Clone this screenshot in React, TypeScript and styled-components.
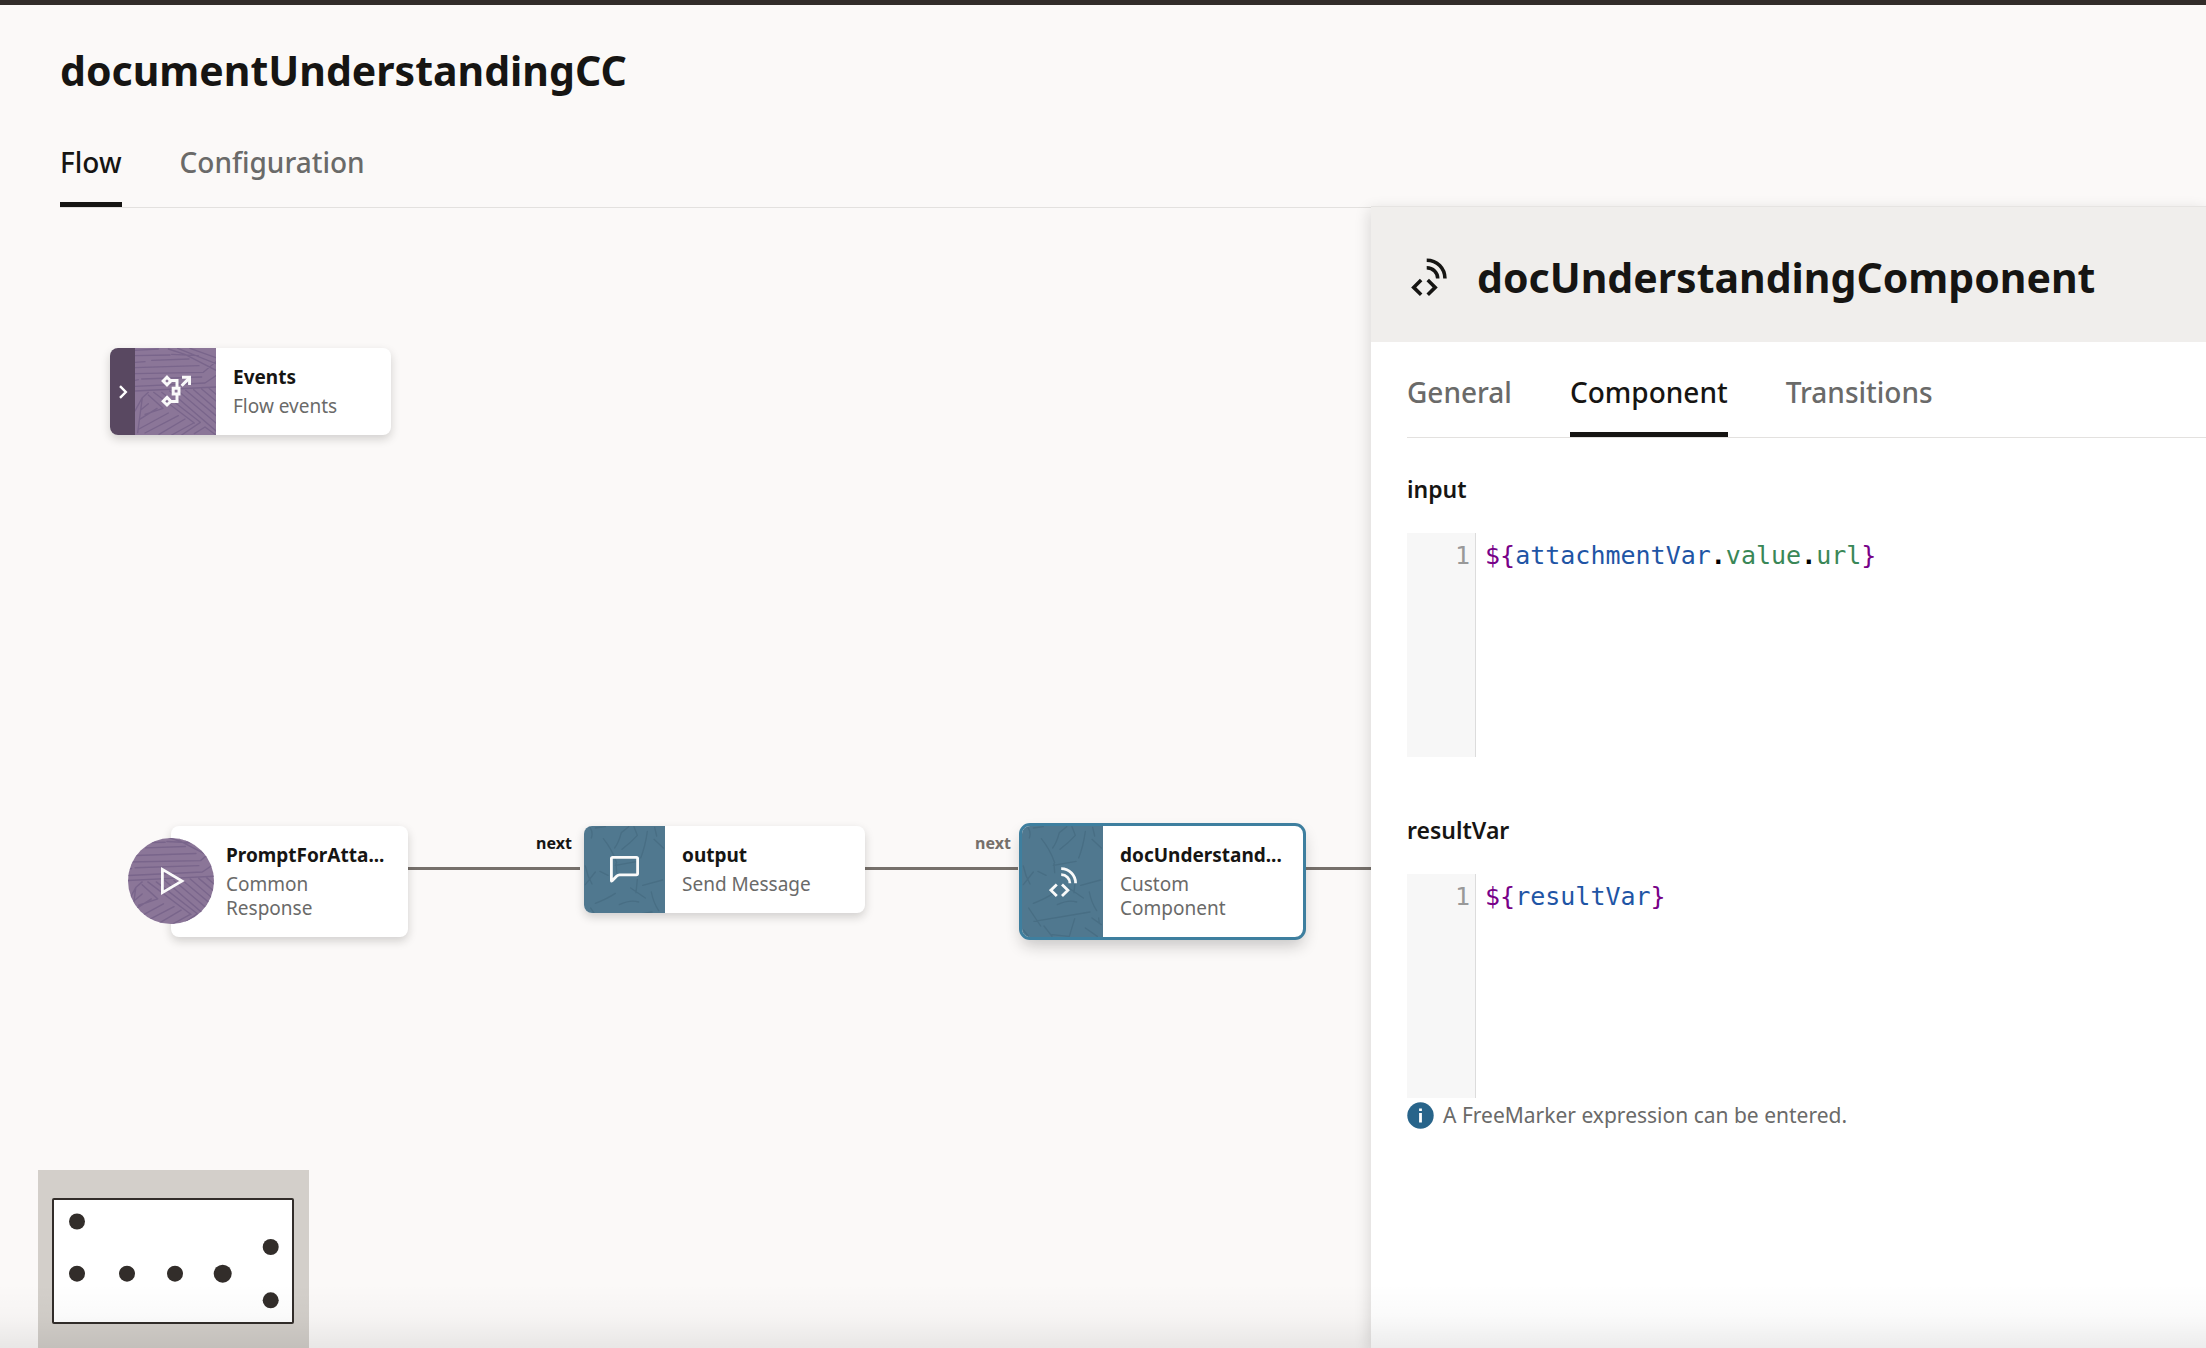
import React, { useId, useState } from 'react';
import styled, { createGlobalStyle, css } from 'styled-components';

const color = {
  ink: '#161513',
  muted: '#6a6a69',
  canvas: '#fbf9f8',
  line: '#e3e1df',
  edge: '#76706b',
  teal: '#50788f',
  tealLine: '#486e84',
  purple: '#8b7698',
  purpleLine: '#79658b',
  focus: '#3e7f9f',
};

const GlobalStyle = createGlobalStyle`
  *, *::before, *::after { box-sizing: border-box; }
  body {
    margin: 0;
    background: ${color.canvas};
    color: ${color.ink};
    font-family: "Noto Sans", "Open Sans", sans-serif;
  }
  button, textarea { font: inherit; color: inherit; }
  h1, h2, p, pre { margin: 0; }
`;

/* ---------- page shell ---------- */

const Page = styled.div`
  position: relative;
  display: flex;
  flex-direction: column;
  min-height: 100vh;
  border-top: 5px solid #322d2a;
  overflow: hidden;

  &::after {
    content: '';
    position: absolute;
    inset: auto 0 0;
    height: 64px;
    background: linear-gradient(rgba(0, 0, 0, 0), rgba(0, 0, 0, 0.02) 50%, rgba(0, 0, 0, 0.075));
    pointer-events: none;
    z-index: 5;
  }
`;

const PageHeader = styled.header`
  display: flex;
  flex-direction: column;
  gap: 44px;
  padding: 37px 0 0 60px;
`;

const heading = css`
  font-size: 41px;
  line-height: 56px;
  font-weight: 700;
`;

const PageTitle = styled.h1`
  ${heading}
`;

const Tabs = styled.div`
  display: flex;
  gap: 58px;
  border-bottom: 1px solid ${color.line};
`;

const Tab = styled.button`
  padding: 0 0 20px;
  border: 0;
  border-bottom: 5px solid transparent;
  background: none;
  color: ${color.muted};
  font-size: 28px;
  line-height: 40px;
  font-weight: 500;
  cursor: pointer;

  &[aria-selected='true'] {
    color: ${color.ink};
    border-bottom-color: ${color.ink};
  }
`;

const Workspace = styled.main`
  flex: 1;
  display: grid;
  grid-template-columns: minmax(0, 1.642fr) minmax(0, 1fr);
`;

/* ---------- flow canvas ---------- */

const Canvas = styled.section`
  position: relative;
  overflow: hidden;
`;

const Edges = styled.svg`
  position: absolute;
  inset: 0;
  width: 100%;
  height: 100%;
`;

const EdgeLabel = styled.span<{ $x: number; $y: number; $strong?: boolean }>`
  position: absolute;
  left: ${(p) => p.$x}px;
  top: ${(p) => p.$y}px;
  color: ${(p) => (p.$strong ? color.ink : color.edge)};
  font-size: 16px;
  line-height: 24px;
  font-weight: 700;
`;

const NodeCard = styled.article<{ $x: number; $y: number; $start?: boolean; $selected?: boolean }>`
  position: absolute;
  left: ${(p) => p.$x}px;
  top: ${(p) => p.$y}px;
  display: flex;
  width: ${(p) => (p.$start ? 237 : 281)}px;
  padding-left: ${(p) => (p.$start ? 38 : 0)}px;
  border-radius: 8px;
  background: #fff;
  box-shadow: 0 4px 10px rgba(22, 21, 19, 0.18);
  ${(p) =>
    p.$selected &&
    css`
      outline: 3px solid ${color.focus};
      box-shadow: 0 8px 16px rgba(22, 21, 19, 0.24);
    `}
`;

const NodeText = styled.div`
  flex: 1;
  min-width: 0;
  padding: 17px 18px 17px 17px;
`;

const NodeTitle = styled.h2`
  margin-bottom: 5px;
  font-size: 19px;
  line-height: 24px;
  font-weight: 700;
  white-space: nowrap;
`;

const NodeType = styled.p`
  color: ${color.muted};
  font-size: 19px;
  line-height: 24px;
`;

const Expander = styled.button`
  flex: none;
  display: grid;
  place-items: center;
  width: 25px;
  padding: 0;
  border: 0;
  border-radius: 8px 0 0 8px;
  background: #594861;
  color: #fff;
  cursor: pointer;
`;

const Tile = styled.div<{ $tone: 'teal' | 'purple'; $rounded?: boolean }>`
  position: relative;
  z-index: 0;
  flex: none;
  display: grid;
  place-items: center;
  width: 81px;
  overflow: hidden;
  border-radius: ${(p) => (p.$rounded ? '8px 0 0 8px' : '0')};
  background: ${(p) => (p.$tone === 'teal' ? color.teal : color.purple)};
  color: #fafafa;
`;

const StartBadge = styled(Tile)`
  position: absolute;
  left: -43px;
  top: 12px;
  width: 86px;
  height: 86px;
  border-radius: 50%;
`;

/* Texture painted behind the tile's icon. */
const PatternSvg = styled.svg`
  position: absolute;
  inset: 0;
  z-index: -1;
  width: 100%;
  height: 100%;
`;

const MiniMap = styled.div`
  position: absolute;
  left: 38px;
  bottom: 0;
  width: 271px;
  height: 178px;
  padding: 28px 14px;
  background: #d3cfca;
`;

const MiniMapView = styled.svg`
  display: block;
  width: 242px;
  height: 126px;
`;

/* ---------- property panel ---------- */

const Panel = styled.aside`
  position: relative;
  z-index: 1;
  margin-top: -2px;
  border-top: 1px solid #e6e4e2;
  background: #fff;
  box-shadow: -2px 4px 14px rgba(22, 21, 19, 0.14);
`;

const PanelHeader = styled.header`
  display: flex;
  align-items: center;
  gap: 30px;
  padding: 42px 40px 37px;
  background: #f0eeec;
`;

const PanelTitle = styled.h2`
  ${heading}
`;

const PanelBody = styled.div`
  padding: 30px 0 0 36px;
`;

const Fields = styled.div`
  display: flex;
  flex-direction: column;
  gap: 57px;
  padding: 35px 36px 0 0;
`;

const Field = styled.div`
  display: flex;
  flex-direction: column;
`;

const FieldLabel = styled.label`
  margin-bottom: 28px;
  font-size: 23px;
  line-height: 32px;
  font-weight: 600;
`;

const Editor = styled.div`
  display: grid;
  grid-template-columns: 69px minmax(0, 1fr);
  height: 224px;
  font-family: "DejaVu Sans Mono", monospace;
  font-size: 25px;
  line-height: 32px;
`;

const Gutter = styled.div`
  padding: 7px 5px;
  border-right: 1px solid #dcdcdc;
  background: #f7f7f7;
  color: #999;
  text-align: right;
`;

const CodeArea = styled.div`
  display: grid;
`;

const codeLayer = css`
  grid-area: 1 / 1;
  padding: 7px 9px;
  font: inherit;
  white-space: pre-wrap;
`;

const Highlighted = styled.pre`
  ${codeLayer}
`;

const CodeInput = styled.textarea`
  ${codeLayer}
  border: 0;
  outline: 0;
  resize: none;
  background: none;
  color: transparent;
  caret-color: ${color.ink};
`;

const tokenColor = { delimiter: '#770088', variable: '#1f55a5', property: '#3a8757', dot: '#000000' };

const Token = styled.span<{ $kind: keyof typeof tokenColor }>`
  color: ${(p) => tokenColor[p.$kind]};
  font-weight: ${(p) => (p.$kind === 'dot' ? 700 : 400)};
`;

const Hint = styled.p`
  display: flex;
  align-items: center;
  gap: 9px;
  margin-top: 1px;
  color: ${color.muted};
  font-size: 21px;
  line-height: 32px;
`;

/* ---------- drawings ---------- */

const PurplePattern = () => (
  <PatternSvg viewBox="0 0 243 263" preserveAspectRatio="xMidYMid slice" aria-hidden="true">
    <path
      fill="none"
      stroke={color.purpleLine}
      strokeWidth="4"
      strokeLinecap="round"
      strokeLinejoin="round"
      d="M0 8L70 4M0 24L105 22M50 38L162 34M0 44L30 42M0 60L192 54M0 78L205 74L243 42M20 94L200 88M0 98L10 96M0 116L210 106L243 84
      M100 4L150 20L243 68M128 2L243 48M165 2L243 30M110 20L190 24M0 130L120 124L243 118
      M8 255L22 150L0 190M22 150L40 134M20 185L40 168M14 215L66 182M12 244L100 196M30 256L130 204M72 260L150 214
      M56 134L178 226M40 142L84 182L30 200M80 134L196 224L140 262M104 130L243 250M130 130L243 226M152 128L243 204M176 126L243 184M200 124L243 160M222 122L243 140
      M110 262L176 226M178 258L210 238L243 262"
    />
  </PatternSvg>
);

const TealPattern = () => (
  <PatternSvg viewBox="0 0 243 333" preserveAspectRatio="xMidYMin slice" aria-hidden="true">
    <path
      fill="none"
      stroke={color.tealLine}
      strokeWidth="4"
      strokeLinecap="round"
      d="M18 4Q28 20 22 36M34 6L64 2M58 38Q84 70 98 110M94 118L162 106M96 112L98 140M92 66Q104 50 112 20L134 2M114 70Q140 50 160 28L150 2M190 16Q184 60 170 96
      M212 4L218 30M210 40L238 66M4 120Q10 150 24 174M4 176L34 138M48 136L72 148M176 178L236 162M160 160L156 200M140 186L184 216
      M34 232Q70 218 94 202M106 236Q140 220 164 228M20 246L56 300M36 286L204 258M202 198Q208 230 224 254M142 331L158 278M66 300L90 331M210 276L238 296M230 276L232 292M190 306L226 331M90 326L140 331M4 312L20 331"
    />
  </PatternSvg>
);

const ChevronIcon = () => (
  <svg width="10" height="14" viewBox="0 0 10 14" fill="none" stroke="currentColor" strokeWidth="2.4" aria-hidden="true">
    <path d="M2 1.2L7.8 7L2 12.8" />
  </svg>
);

const EventsIcon = () => (
  <svg width="30" height="33" viewBox="0 0 30 33" fill="none" stroke="currentColor" strokeWidth="3" aria-hidden="true">
    <path d="M6 2.2L9.8 6L6 9.8L2.2 6ZM6 22.4L9.8 26.2L6 30L2.2 26.2ZM12.2 13.2H18V19H12.2Z" />
    <path d="M10 5.6H16V12M10 26.6H16V20M20.6 10.8L28 3.4" />
    <path d="M21 2.2H28.6V10" />
  </svg>
);

const PlayIcon = () => (
  <svg width="28" height="30" viewBox="0 0 28 30" fill="none" stroke="currentColor" strokeWidth="2.8" aria-hidden="true">
    <path d="M5.4 3.4V26.6L25 15Z" />
  </svg>
);

const MessageIcon = () => (
  <svg width="29" height="27" viewBox="0 0 29 27" fill="none" stroke="currentColor" strokeWidth="2.8" strokeLinejoin="round" aria-hidden="true">
    <path d="M1.4 2.6Q1.4 1.4 2.6 1.4H26.4Q27.6 1.4 27.6 2.6V17.6Q27.6 18.8 26.4 18.8H9.6Q8 18.8 6.8 20L1.9 25Q1.4 25.4 1.4 24.6Z" />
  </svg>
);

const CustomComponentIcon = ({ width, height }: { width: number; height: number }) => (
  <svg width={width} height={height} viewBox="0 0 28 30" fill="none" stroke="currentColor" strokeWidth="2.8" aria-hidden="true">
    <path d="M12.2 1.7C20.4 1.7 26.6 8.2 26.6 16.2M12.2 7.7C17.2 7.7 20.9 11.6 20.9 16.2" />
    <path d="M7.8 17.4L1.9 23.2L7.8 29M13 17.4L18.9 23.2L13 29" />
  </svg>
);

const InfoIcon = () => (
  <svg width="27" height="27" viewBox="0 0 27 27" aria-hidden="true">
    <circle cx="13.5" cy="13.5" r="13.2" fill="#28648a" />
    <path d="M13.5 11V20.5M13.5 6.5V9" stroke="#fff" strokeWidth="2.8" />
  </svg>
);

/* ---------- pieces ---------- */

const TabBar = ({ items, initial, label }: { items: string[]; initial: string; label: string }) => {
  const [active, setActive] = useState(initial);
  return (
    <Tabs role="tablist" aria-label={label}>
      {items.map((item) => (
        <Tab key={item} type="button" role="tab" aria-selected={item === active} onClick={() => setActive(item)}>
          {item}
        </Tab>
      ))}
    </Tabs>
  );
};

const highlight = (source: string) => {
  const parts = source.match(/\$\{|\}|\.|\w+|[^\w.}]/g) ?? [];
  return parts.map((part, i) => {
    const kind =
      part === '${' || part === '}' ? 'delimiter' : part === '.' ? 'dot' : parts[i - 1] === '.' ? 'property' : 'variable';
    return (
      <Token key={i} $kind={kind}>
        {part}
      </Token>
    );
  });
};

const ExpressionField = ({ name, initial, hint }: { name: string; initial: string; hint?: string }) => {
  const id = useId();
  const [value, setValue] = useState(initial);
  return (
    <Field>
      <FieldLabel htmlFor={id}>{name}</FieldLabel>
      <Editor>
        <Gutter>
          {value.split('\n').map((_, i) => (
            <div key={i}>{i + 1}</div>
          ))}
        </Gutter>
        <CodeArea>
          <Highlighted aria-hidden="true">{highlight(value)}</Highlighted>
          <CodeInput id={id} spellCheck={false} value={value} onChange={(e) => setValue(e.target.value)} />
        </CodeArea>
      </Editor>
      {hint && (
        <Hint>
          <InfoIcon />
          {hint}
        </Hint>
      )}
    </Field>
  );
};

const NodeCaption = ({ title, type }: { title: string; type: string }) => (
  <NodeText>
    <NodeTitle>{title}</NodeTitle>
    <NodeType>{type}</NodeType>
  </NodeText>
);

const overviewDots = [
  [39, 22.5, 8],
  [39, 74.7, 8],
  [89, 74.7, 8],
  [137, 74.7, 8],
  [184.7, 74.7, 9],
  [232.7, 48, 8],
  [232.7, 101.3, 8],
];

const FlowCanvas = () => (
  <Canvas aria-label="Flow diagram">
    <Edges stroke={color.edge} strokeWidth="3" aria-hidden="true">
      <path d="M408 660.5H580M865 660.5H1018M1306 660.5H1372" />
    </Edges>
    <EdgeLabel $x={536} $y={623} $strong>
      next
    </EdgeLabel>
    <EdgeLabel $x={975} $y={623}>
      next
    </EdgeLabel>

    <NodeCard $x={110} $y={140}>
      <Expander type="button" aria-label="Expand events">
        <ChevronIcon />
      </Expander>
      <Tile $tone="purple">
        <PurplePattern />
        <EventsIcon />
      </Tile>
      <NodeCaption title="Events" type="Flow events" />
    </NodeCard>

    <NodeCard $x={171} $y={618} $start>
      <StartBadge $tone="purple">
        <PurplePattern />
        <PlayIcon />
      </StartBadge>
      <NodeCaption title="PromptForAtta..." type="Common Response" />
    </NodeCard>

    <NodeCard $x={584} $y={618}>
      <Tile $tone="teal" $rounded>
        <TealPattern />
        <MessageIcon />
      </Tile>
      <NodeCaption title="output" type="Send Message" />
    </NodeCard>

    <NodeCard $x={1022} $y={618} $selected>
      <Tile $tone="teal" $rounded>
        <TealPattern />
        <CustomComponentIcon width={28} height={30} />
      </Tile>
      <NodeCaption title="docUnderstand..." type="Custom Component" />
    </NodeCard>

    <MiniMap>
      <MiniMapView viewBox="14 -1 242 126" aria-hidden="true">
        <rect x="15" y="0" width="240" height="124" rx="1" fill="#fff" stroke="#322d2a" strokeWidth="2" />
        {overviewDots.map(([cx, cy, r]) => (
          <circle key={`${cx}-${cy}`} cx={cx} cy={cy} r={r} fill="#322d2a" />
        ))}
      </MiniMapView>
    </MiniMap>
  </Canvas>
);

export default function App() {
  return (
    <>
      <GlobalStyle />
      <Page>
        <PageHeader>
          <PageTitle>documentUnderstandingCC</PageTitle>
          <TabBar label="Flow views" items={['Flow', 'Configuration']} initial="Flow" />
        </PageHeader>
        <Workspace>
          <FlowCanvas />
          <Panel>
            <PanelHeader>
              <CustomComponentIcon width={36} height={38} />
              <PanelTitle>docUnderstandingComponent</PanelTitle>
            </PanelHeader>
            <PanelBody>
              <TabBar label="Component settings" items={['General', 'Component', 'Transitions']} initial="Component" />
              <Fields>
                <ExpressionField name="input" initial="${attachmentVar.value.url}" />
                <ExpressionField name="resultVar" initial="${resultVar}" hint="A FreeMarker expression can be entered." />
              </Fields>
            </PanelBody>
          </Panel>
        </Workspace>
      </Page>
    </>
  );
}
